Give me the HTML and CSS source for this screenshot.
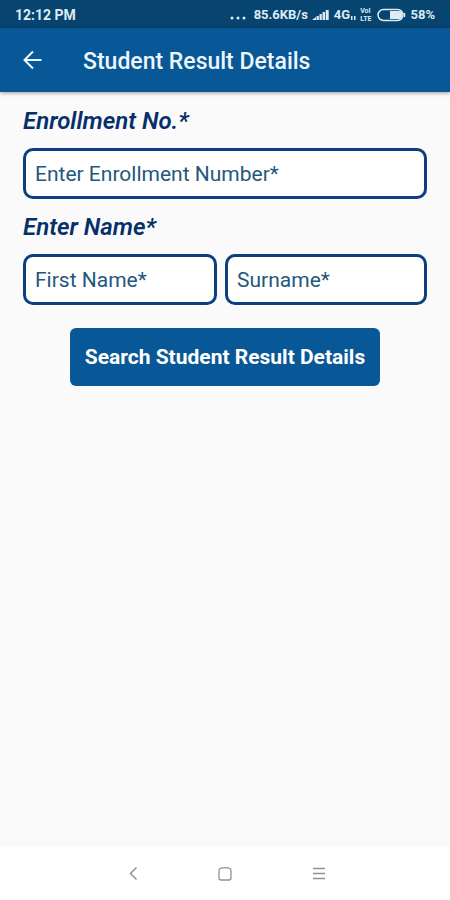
FILE: index.html
```html
<!DOCTYPE html>
<html lang="en">

<head>
  <meta charset="utf-8">
  <meta name="viewport" content="width=device-width, initial-scale=1">
  <title>Student Result Details</title>
  <link rel="stylesheet" href="styles.css">
</head>

<body>
  <div class="status">
    <span class="clock">12:12 PM</span>
    <svg class="dots" width="16" height="14" viewBox="0 0 16 14" fill="currentColor">
      <circle cx="2" cy="10" r="1.500" /><circle cx="8" cy="10" r="1.500" /><circle cx="14" cy="10" r="1.500" />
    </svg>
    <span class="speed">85.6KB/s</span>
    <svg class="signal" width="18" height="14" viewBox="0 0 18 14" fill="currentColor">
      <path d="M0 12L4 9V12zM4.500 8h2.300v4H4.500zM7.500 6h2.300v6H7.500zM10.500 4h2.500v8h-2.500zM13.700 2h3v10h-3z" />
    </svg>
    <span class="network">4G</span>
    <svg class="data" width="7" height="14" viewBox="0 0 7 14" fill="currentColor">
      <path d="M1 8h1.500v4H1zM4 8h1.500v4H4z" />
    </svg>
    <span class="volte"><span>VoI</span><span>LTE</span></span>
    <svg class="battery" width="29" height="14" viewBox="0 0 29 14">
      <rect x="1" y="1.500" width="25" height="11" rx="5.500" fill="none" stroke="currentColor" stroke-width="1.500" />
      <path d="M13 3h9a3 3 0 0 1 3 3v2a3 3 0 0 1-3 3h-9z" fill="currentColor" />
      <path d="M27.500 5v4" stroke="currentColor" stroke-width="1.500" />
    </svg>
    <span>58%</span>
  </div>

  <header class="appbar">
    <button class="back" type="button" aria-label="Back">
      <svg width="20" height="20" viewBox="0 0 20 20" fill="none" stroke="currentColor" stroke-width="2">
        <path d="M19.500 10H3M11 1.500L2.500 10l8.500 8.500" />
      </svg>
    </button>
    <h1>Student Result Details</h1>
  </header>

  <main>
    <form class="search">
      <label class="title" for="enrollment">Enrollment No.*</label>
      <input class="field" id="enrollment" type="text" placeholder="Enter Enrollment Number*">
      <label class="title" for="first">Enter Name*</label>
      <div class="names">
        <input class="field" id="first" type="text" placeholder="First Name*">
        <input class="field" type="text" placeholder="Surname*" aria-label="Surname">
      </div>
      <button class="submit" type="button">Search Student Result Details</button>
    </form>
  </main>

  <nav class="navbar">
    <button type="button" aria-label="Back">
      <svg width="16" height="16" viewBox="0 0 16 16" fill="none" stroke="currentColor" stroke-width="1.500">
        <path d="M13.500 1.500L7.500 7.500l6 6" />
      </svg>
    </button>
    <button type="button" aria-label="Home">
      <svg width="16" height="16" viewBox="0 0 16 16" fill="none" stroke="currentColor" stroke-width="1.300">
        <path d="M2 4.500Q2 2.500 4 2.200Q8 .9 12 2.200Q14 2.500 14 4.500V12Q14 14 12 14H4Q2 14 2 12z" />
      </svg>
    </button>
    <button type="button" aria-label="Menu">
      <svg width="16" height="16" viewBox="0 0 16 16" fill="none" stroke="currentColor" stroke-width="1.500">
        <path d="M2 2.500h12M2 7.500h12M2 12.500h12" />
      </svg>
    </button>
  </nav>
</body>

</html>
```
FILE: styles.css
```css
* {
  box-sizing: border-box;
}

body {
  display: flex;
  flex-direction: column;
  min-height: 100vh;
  margin: 0;
  background: #fafafa;
  font-family: Roboto, "Liberation Sans", sans-serif;
}

button {
  border: 0;
  padding: 0;
  background: none;
  color: inherit;
  font-family: inherit;
}

svg {
  display: block;
}

.status {
  display: flex;
  align-items: center;
  height: 28px;
  padding: 1px 15px 0;
  background: #07446f;
  color: #dcebf5;
  font-size: 13px;
  font-weight: 700;
}

.clock {
  margin-right: auto;
  font-size: 14px;
}

.speed {
  margin: 0 4px 0 8px;
}

.network {
  margin-left: 4px;
}

.volte {
  display: flex;
  flex-direction: column;
  margin: 0 6px 0 3px;
  font-size: 7px;
  line-height: 8px;
}

.battery {
  margin-right: 4px;
}

.appbar {
  display: flex;
  align-items: center;
  height: 64px;
  padding: 0 22px;
  background: #085796;
  color: #eef6fc;
  box-shadow: 0 1px 4px rgba(0, 0, 0, 0.4);
}

.appbar h1 {
  margin: 2px 0 0 41px;
  font-size: 23px;
  font-weight: 500;
}

main {
  flex: 1;
  padding: 14px 23px;
}

.search {
  display: flex;
  flex-direction: column;
}

.title {
  margin-bottom: 12px;
  color: #07306a;
  font-size: 24px;
  font-style: italic;
  font-weight: 600;
  line-height: 30px;
}

.field {
  width: 100%;
  min-width: 0;
  height: 51px;
  margin-bottom: 13px;
  border: 3px solid #0c3f80;
  border-radius: 10px;
  padding: 0 9px;
  background: #fff;
  color: #24577c;
  font-family: inherit;
  font-size: 21px;
}

.field::placeholder {
  color: #24577c;
  opacity: 1;
}

.names {
  display: grid;
  grid-template-columns: 49fr 51fr;
  gap: 8px;
}

.submit {
  align-self: center;
  margin-top: 10px;
  border-radius: 6px;
  padding: 16px 15px;
  background: #085796;
  color: #fff;
  font-size: 21px;
  font-weight: 700;
  line-height: 26px;
}

.navbar {
  display: flex;
  justify-content: center;
  align-items: center;
  gap: 78px;
  height: 53px;
  background: #fff;
  color: #929292;
}
```
